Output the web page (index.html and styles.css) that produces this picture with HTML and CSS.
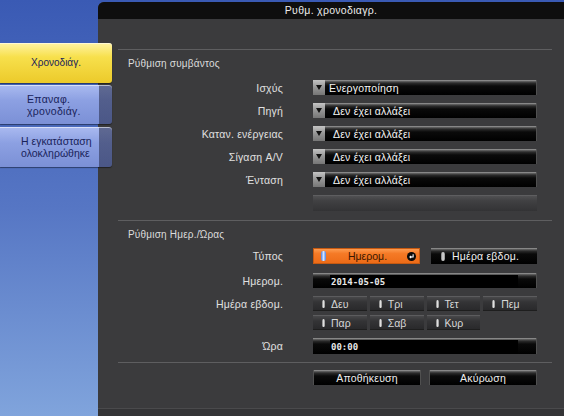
FILE: index.html
```html
<!DOCTYPE html>
<html lang="el">
<head>
<meta charset="utf-8">
<title>Ρυθμ. χρονοδιαγρ.</title>
<link rel="stylesheet" href="styles.css">
</head>
<body>
<div class="screen">
  <aside class="sidebar">
    <div class="tab tab-active">Χρονοδιάγ.</div>
    <div class="tab tab-plain tab-reset"><span>Επαναφ.<br>χρονοδιάγ.</span></div>
    <div class="tab tab-plain tab-done"><span>Η εγκατάσταση<br>ολοκληρώθηκε</span></div>
  </aside>
  <main class="panel">
    <header class="titlebar">Ρυθμ. χρονοδιαγρ.</header>
    <div class="content">
      <section class="section section-event">
        <h2 class="section-title">Ρύθμιση συμβάντος</h2>
        <div class="form">
          <div class="label">Ισχύς</div>
          <div class="field select"><span class="arrow"><svg width="6" height="5" viewBox="0 0 6 5"><polygon points="0,0 6,0 3,5" fill="#111"/></svg></span><span class="value value-first">Ενεργοποίηση</span></div>
          <div class="label">Πηγή</div>
          <div class="field select"><span class="arrow"><svg width="6" height="5" viewBox="0 0 6 5"><polygon points="0,0 6,0 3,5" fill="#111"/></svg></span><span class="value">Δεν έχει αλλάξει</span></div>
          <div class="label">Καταν. ενέργειας</div>
          <div class="field select"><span class="arrow"><svg width="6" height="5" viewBox="0 0 6 5"><polygon points="0,0 6,0 3,5" fill="#111"/></svg></span><span class="value">Δεν έχει αλλάξει</span></div>
          <div class="label">Σίγαση A/V</div>
          <div class="field select"><span class="arrow"><svg width="6" height="5" viewBox="0 0 6 5"><polygon points="0,0 6,0 3,5" fill="#111"/></svg></span><span class="value">Δεν έχει αλλάξει</span></div>
          <div class="label">Ένταση</div>
          <div class="field select"><span class="arrow"><svg width="6" height="5" viewBox="0 0 6 5"><polygon points="0,0 6,0 3,5" fill="#111"/></svg></span><span class="value">Δεν έχει αλλάξει</span></div>
          <div class="label"></div>
          <div class="field-empty"></div>
        </div>
      </section>
      <section class="section section-date">
        <h2 class="section-title title-date">Ρύθμιση Ημερ./Ώρας</h2>
        <div class="form">
          <div class="label row-type">Τύπος</div>
          <div class="type-buttons row-type">
            <div class="btn-orange"><span class="pill pill-blue"></span><span class="orange-text">Ημερομ.</span><svg class="enter" width="9" height="9" viewBox="0 0 10 10"><circle cx="5" cy="5" r="5" fill="#0a0a0a"/><path d="M6.8 2.6 V5.6 H3.3 M4.6 4.3 L3.2 5.6 L4.6 6.9" fill="none" stroke="#fff" stroke-width="1.2"/></svg></div>
            <div class="btn-dark"><span class="pill"></span><span class="btn-dark-text">Ημέρα εβδομ.</span></div>
          </div>
          <div class="label">Ημερομ.</div>
          <div class="field spin"><span class="spin-value">2014-05-05</span></div>
          <div class="label label-days">Ημέρα εβδομ.</div>
          <div class="days">
            <div class="day"><span class="pill"></span>Δευ</div>
            <div class="day"><span class="pill"></span>Τρι</div>
            <div class="day"><span class="pill"></span>Τετ</div>
            <div class="day"><span class="pill"></span>Πεμ</div>
            <div class="day"><span class="pill"></span>Παρ</div>
            <div class="day"><span class="pill"></span>Σαβ</div>
            <div class="day"><span class="pill"></span>Κυρ</div>
          </div>
          <div class="label">Ώρα</div>
          <div class="field spin spin-time"><span class="spin-value">00:00</span></div>
        </div>
      </section>
      <section class="section section-actions">
        <div class="form">
          <div class="label"></div>
          <div class="actions">
            <div class="btn-action">Αποθήκευση</div>
            <div class="btn-action">Ακύρωση</div>
          </div>
        </div>
      </section>
    </div>
  </main>
</div>
</body>
</html>
```
FILE: styles.css
```css
* { box-sizing: border-box; margin: 0; padding: 0; }
html, body { width: 564px; height: 416px; overflow: hidden; }
body {
  background: linear-gradient(#3a5ab4, #5676c4 50%, #80a4dc);
  font-family: "Liberation Sans", Arial, sans-serif;
  font-size: 10.5px;
}
.screen { display: flex; height: 416px; }

.sidebar {
  width: 98px; flex: none;
  padding-top: 43px;
  display: flex; flex-direction: column; gap: 2px;
  position: relative; z-index: 2;
}
.tab {
  width: 112px; height: 40px;
  display: flex; align-items: center; justify-content: center;
  color: #19235a; line-height: 12px; font-size: 10.5px;
  border-radius: 0 3px 3px 0;
  box-shadow: inset 0 1px 0 rgba(255,255,255,.55), 0 1px 1px rgba(0,0,0,.45);
}
.tab-active {
  background: linear-gradient(#fff3a4, #f7e04c 35%, #ecca2a);
  font-size: 10px;
}
.tab-plain {
  height: 39px;
  justify-content: flex-start;
  background:
    linear-gradient(to right, transparent 99px, rgba(35,40,70,.55) 99px),
    linear-gradient(#aabaf0, #8ca0e2 40%, #7b90d6);
}
.tab-plain span { text-align: left; }
.tab-reset { padding-left: 27px; letter-spacing: .3px; }
.tab-done { height: 40px; margin-top: 1px; padding-left: 21px; }

.panel {
  flex: 1;
  margin-top: 2px; height: 414px;
  background: linear-gradient(#3b3b3d 406px, #4a4a4c 406px, #4a4a4c 407px, #343436 407px);
  border-radius: 6px 0 0 0;
  overflow: hidden;
}
.titlebar {
  height: 17px; line-height: 17px;
  background: #0e0e0e; color: #ececec;
  text-align: center; font-size: 10.5px; letter-spacing: .3px;
}
.content { padding: 30px 12px 0 20px; }
.section { border-top: 1px solid #5e5e60; }
.section-event { padding-bottom: 9px; }
.section-date { padding-bottom: 8px; }
.section-actions { padding-top: 7px; }
.section-title {
  font-weight: normal; font-size: 10px; color: #dcdcdc;
  line-height: 12px; padding: 8px 0 0 10px; margin-bottom: 10px;
  letter-spacing: .2px;
}
.title-date { margin-bottom: 7px; }

.form {
  display: grid;
  grid-template-columns: 165px 224px;
  column-gap: 30px; row-gap: 8px;
  align-items: center;
}
.label { text-align: right; color: #e0e0e0; letter-spacing: .2px; }
.label-days { align-self: start; padding-top: 2px; }
.row-type { margin-bottom: 1px; }

.field {
  height: 15px;
  display: flex; align-items: center;
  color: #f4f4f4;
  background: linear-gradient(#a4a4a4 0, #6a6a6a 1px, #2c2c2c 3px, #0a0a0a 6px, #000 100%);
  box-shadow: inset -1px 0 #505050;
}
.arrow {
  width: 12px; height: 100%;
  display: flex; align-items: center; justify-content: center;
  background: linear-gradient(#c4c4c4, #959595 50%, #767676);
}
.value { padding-left: 8px; letter-spacing: .2px; }
.value-first { padding-left: 4px; }
.field-empty {
  height: 16px;
  background: linear-gradient(#545456, #414143 35%, #333335);
  box-shadow: inset 0 1px #5e5e60;
}

.type-buttons { display: flex; gap: 11px; height: 16px; }
.pill {
  width: 4px; height: 9px; border-radius: 2px; flex: none;
  background: linear-gradient(to right, #777, #e0e0e0 50%, #888);
}
.btn-orange {
  width: 107px; height: 16px;
  display: flex; align-items: center;
  padding: 0 4px 0 8px;
  background: linear-gradient(#ffa258, #f57a26 35%, #ec6a16);
  box-shadow: inset 0 0 0 1px #c65a12;
}
.pill-blue { width: 5px; background: linear-gradient(to right, #4d7fe0, #d4e4ff 50%, #4d7fe0); height: 10px; }
.orange-text { flex: 1; text-align: center; color: #3a1800; padding-left: 2px; }
.enter { flex: none; }
.btn-dark {
  width: 106px; height: 16px;
  display: flex; align-items: center;
  padding-left: 10px;
  background: linear-gradient(#a4a4a4 0, #6a6a6a 1px, #2c2c2c 3px, #0a0a0a 6px, #000 100%);
  color: #f0f0f0;
}
.btn-dark-text { padding-left: 7px; letter-spacing: .2px; }

.spin { padding: 0 19px 0 17px; align-items: stretch; }
.spin-time { height: 16px; }
.spin-value {
  flex: 1;
  margin-top: 2px;
  background: #000;
  display: flex; align-items: center;
  font-family: "DejaVu Sans Mono", monospace; font-weight: bold;
  font-size: 9px; color: #e8e8e8; padding-left: 1px;
}

.days {
  display: grid;
  grid-template-columns: repeat(4, 1fr);
  column-gap: 3px; row-gap: 4px;
}
.day {
  height: 15px;
  display: flex; align-items: center; gap: 6px;
  padding-left: 9px;
  color: #d8d8d8;
  background: linear-gradient(#4c4c4e, #343436 40%, #28282a);
  box-shadow: inset 0 1px #5c5c5e, inset 0 -1px #1e1e1e;
}
.day .pill { width: 3px; height: 8px; }

.actions { display: flex; gap: 8px; }
.btn-action {
  flex: 1; height: 15px; line-height: 16px;
  text-align: center; color: #eeeeee; letter-spacing: .2px;
  background: linear-gradient(#a4a4a4 0, #6a6a6a 1px, #2c2c2c 3px, #0a0a0a 6px, #000 100%);
  box-shadow: inset -1px 0 #505050, inset 1px 0 #505050;
}
```
